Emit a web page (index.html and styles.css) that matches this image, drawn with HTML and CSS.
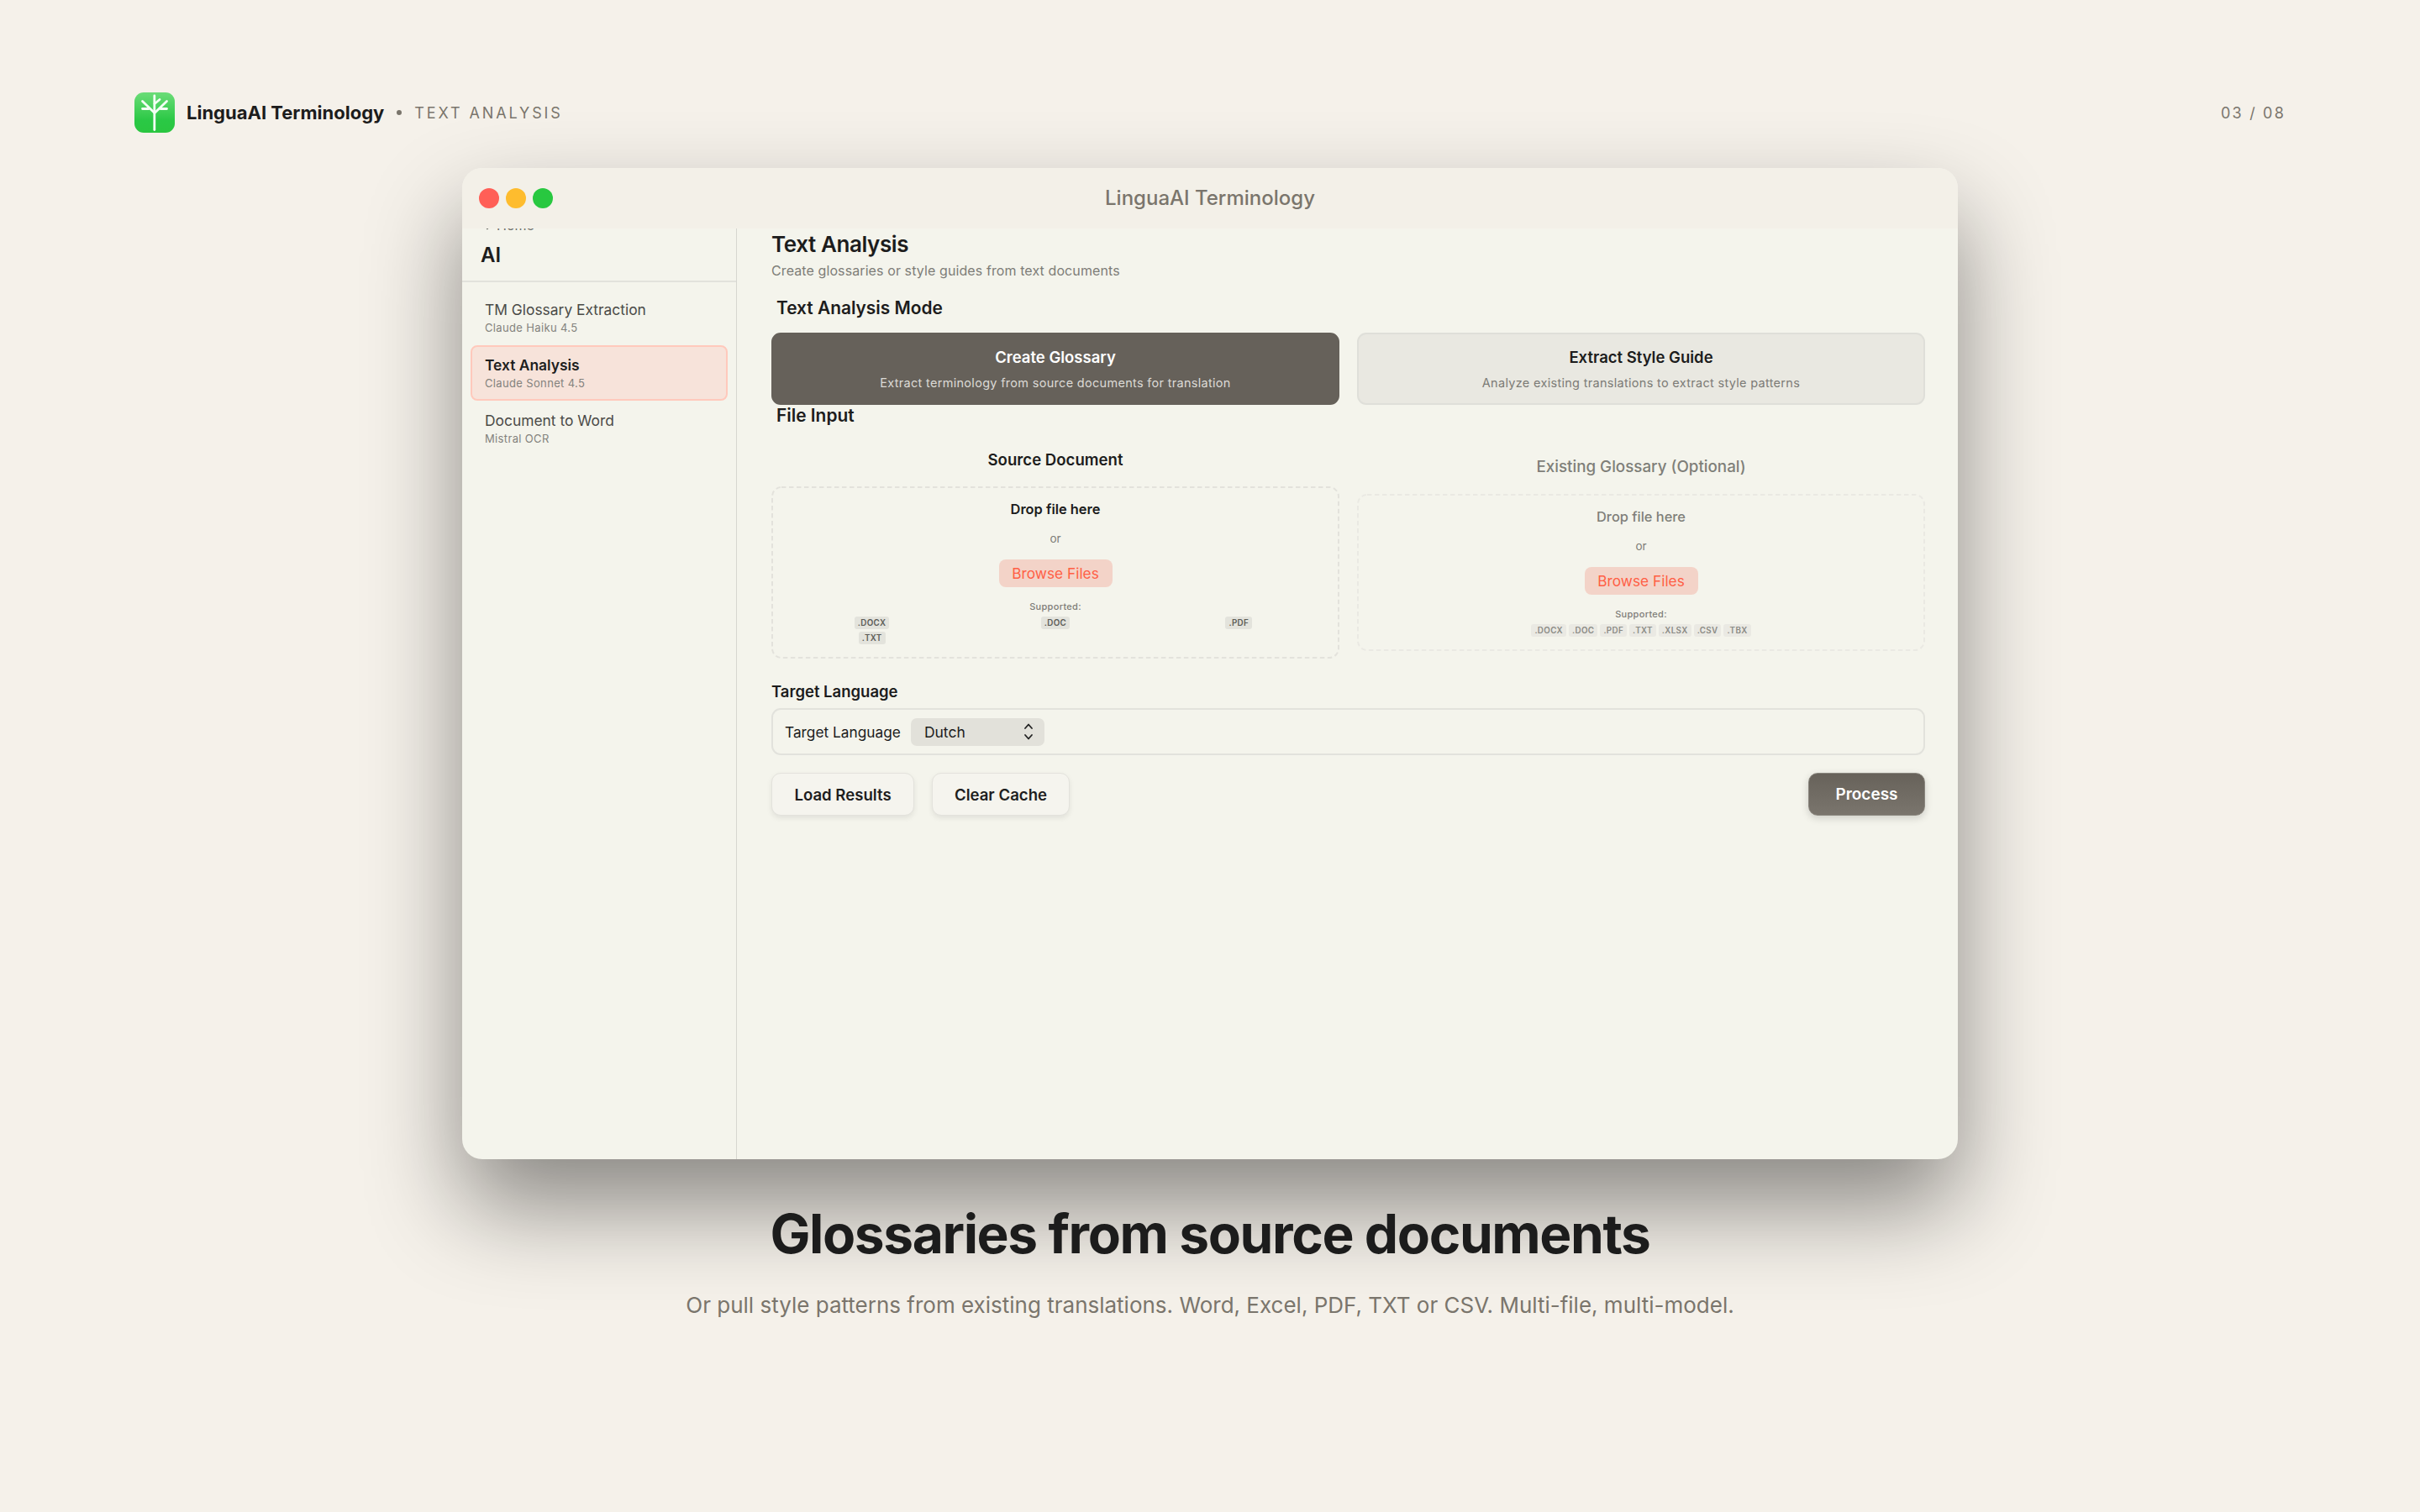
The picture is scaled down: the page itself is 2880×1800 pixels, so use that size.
FILE: index.html
```html
<!DOCTYPE html>
<html lang="en">
<head>
  <meta charset="UTF-8">
  <meta name="viewport" content="width=device-width, initial-scale=1">
  <title>LinguaAI Terminology</title>
  <link rel="stylesheet" href="styles.css">
</head>
<body>

  <header class="top">
    <svg class="logo" width="48" height="48" viewBox="0 0 48 48">
      <defs>
        <linearGradient id="leaf" x1="0" y1="0" x2="0" y2="1">
          <stop offset="0" stop-color="#6bdc77"/>
          <stop offset="0.7" stop-color="#2ac845"/>
          <stop offset="1" stop-color="#2ac640"/>
        </linearGradient>
      </defs>
      <rect width="48" height="48" rx="11" fill="url(#leaf)"/>
      <g fill="none" stroke="#f4fff5" stroke-width="2.8" stroke-linecap="round">
        <path d="M23.8 4V44.500"/>
        <path d="M24 24.500L9.500 10.500M24 24.500L38.500 10.500M24 13.500L30 8.500"/>
        <path d="M9.500 19.500H17M31 19.500H38.500"/>
      </g>
    </svg>
    <span class="brand">LinguaAI Terminology</span>
    <span class="dot"></span>
    <span class="section-name">TEXT ANALYSIS</span>
    <span class="page-no">03 / 08</span>
  </header>

  <div class="window">
    <div class="titlebar">
      <div class="lights">
        <span class="light red"></span>
        <span class="light yellow"></span>
        <span class="light green"></span>
      </div>
      <span class="window-title">LinguaAI Terminology</span>
    </div>

    <div class="window-body">
      <aside class="sidebar">
        <div class="sidebar-head">
          <div class="back">
            <svg width="7" height="12" viewBox="0 0 7 12"><path d="M5.500 1L1.500 6L5.500 11" fill="none" stroke="currentColor" stroke-width="1.700"/></svg>
            <span>Home</span>
          </div>
          <h2>AI</h2>
        </div>
        <nav class="menu">
          <div class="menu-item">
            <div class="menu-title">TM Glossary Extraction</div>
            <div class="menu-model">Claude Haiku 4.5</div>
          </div>
          <div class="menu-item active">
            <div class="menu-title">Text Analysis</div>
            <div class="menu-model">Claude Sonnet 4.5</div>
          </div>
          <div class="menu-item">
            <div class="menu-title">Document to Word</div>
            <div class="menu-model">Mistral OCR</div>
          </div>
        </nav>
      </aside>

      <main class="content">
        <h1>Text Analysis</h1>
        <p class="intro">Create glossaries or style guides from text documents</p>

        <h3 class="mode-heading">Text Analysis Mode</h3>
        <div class="columns">
          <div class="mode selected">
            <div class="mode-title">Create Glossary</div>
            <div class="mode-text">Extract terminology from source documents for translation</div>
          </div>
          <div class="mode">
            <div class="mode-title">Extract Style Guide</div>
            <div class="mode-text">Analyze existing translations to extract style patterns</div>
          </div>
        </div>

        <h3>File Input</h3>
        <div class="columns files">
          <div class="file">
            <div class="file-title">Source Document</div>
            <div class="drop">
              <svg class="dash"><rect x="1" y="1" rx="11"/></svg>
              <div class="drop-title">Drop file here</div>
              <div class="or">or</div>
              <button class="browse">Browse Files</button>
              <div class="supported">Supported:</div>
              <div class="types grid">
                <span>.DOCX</span><span>.DOC</span><span>.PDF</span><span>.TXT</span>
              </div>
            </div>
          </div>
          <div class="file optional">
            <div class="file-title">Existing Glossary (Optional)</div>
            <div class="drop">
              <svg class="dash"><rect x="1" y="1" rx="11"/></svg>
              <div class="drop-title">Drop file here</div>
              <div class="or">or</div>
              <button class="browse">Browse Files</button>
              <div class="supported">Supported:</div>
              <div class="types">
                <span>.DOCX</span><span>.DOC</span><span>.PDF</span><span>.TXT</span><span>.XLSX</span><span>.CSV</span><span>.TBX</span>
              </div>
            </div>
          </div>
        </div>

        <h4>Target Language</h4>
        <div class="language">
          <label>Target Language</label>
          <div class="select">
            <span>Dutch</span>
            <svg width="12" height="20" viewBox="0 0 12 20"><path d="M2 6L6 1.500L10 6M2 14L6 18.500L10 14" fill="none" stroke="#222" stroke-width="1.800" stroke-linecap="round" stroke-linejoin="round"/></svg>
          </div>
        </div>

        <div class="actions">
          <button class="btn load">Load Results</button>
          <button class="btn clear">Clear Cache</button>
          <button class="btn process">Process</button>
        </div>
      </main>
    </div>
  </div>

  <div class="caption">
    <h2>Glossaries from source documents</h2>
    <p>Or pull style patterns from existing translations. Word, Excel, PDF, TXT or CSV. Multi-file, multi-model.</p>
  </div>

</body>
</html>
```
FILE: styles.css
```css
* {
  box-sizing: border-box;
}

body {
  margin: 0;
  height: 1800px;
  overflow: hidden;
  display: flex;
  flex-direction: column;
  align-items: center;
  font-family: Inter, sans-serif;
  background-color: #f5f1ea;
  color: #1c1c1c;
}

h1, h2, h3, h4, p {
  margin: 0;
}

button {
  font-family: inherit;
  border: none;
}

/* Header */
.top {
  width: 100%;
  height: 200px;
  padding: 110px 160px 42px;
  display: flex;
  align-items: center;
  flex-shrink: 0;
}

.brand {
  margin-left: 14px;
  font-size: 22px;
  font-weight: 700;
}

.dot {
  width: 6px;
  height: 6px;
  margin: 0 15px;
  border-radius: 50%;
  background-color: #7a756c;
}

.section-name,
.page-no {
  font-size: 18px;
  letter-spacing: 2.900px;
  color: #7a756c;
}

.page-no {
  margin-left: auto;
  letter-spacing: 2.200px;
}

/* Window */
.window {
  width: 1780px;
  height: 1180px;
  flex-shrink: 0;
  border-radius: 24px;
  overflow: hidden;
  background-color: #f4f4ec;
  box-shadow: 0 56px 112px rgba(0,0,0,0.44);
}

.titlebar {
  height: 72px;
  padding: 0 20px;
  display: grid;
  grid-template-columns: 1fr auto 1fr;
  align-items: center;
  background-color: #f3f0e8;
}

.lights {
  display: flex;
  gap: 8px;
}

.light {
  width: 24px;
  height: 24px;
  border-radius: 50%;
}

.red { background-color: #ff5f57; }
.yellow { background-color: #febc2e; }
.green { background-color: #28c840; }

.window-title {
  padding-bottom: 2px;
  font-size: 24px;
  font-weight: 500;
  color: #7a756c;
}

.window-body {
  display: flex;
  height: 1108px;
  overflow: hidden;
}

/* Sidebar */
.sidebar {
  width: 327px;
  border-right: 1px solid #d6d6d0;
}

.sidebar-head {
  display: flow-root;
  height: 64px;
  padding-left: 22px;
  border-bottom: 2px solid #e2e2dc;
}

.back {
  display: flex;
  align-items: center;
  gap: 9px;
  height: 20px;
  margin-top: -14px;
  padding-left: 3px;
  font-size: 16px;
  line-height: 20px;
  color: #6f6f6a;
}

.sidebar-head h2 {
  margin-top: 11px;
  font-size: 24px;
  line-height: 30px;
  font-weight: 600;
}

.menu {
  padding: 9px 10px;
}

.menu-item {
  height: 66px;
  padding: 11px 15px 0;
  border: 2px solid transparent;
  border-radius: 8px;
}

.menu-title {
  font-size: 17.400px;
  line-height: 22px;
  color: #4b4b48;
}

.menu-model {
  margin-top: 1px;
  font-size: 13px;
  line-height: 18px;
  letter-spacing: 0.350px;
  color: #83827d;
}

.menu-item.active {
  background-color: #f7e3da;
  border-color: #ffc9bc;
}

.active .menu-title {
  font-weight: 600;
  color: #1e1e1e;
}

/* Content */
.content {
  flex: 1;
  padding: 2px 39px 0 41px;
  display: flex;
  flex-direction: column;
}

h1 {
  font-size: 26px;
  line-height: 34px;
  font-weight: 600;
  letter-spacing: -0.400px;
}

.intro {
  margin-top: 4px;
  font-size: 16px;
  line-height: 20px;
  letter-spacing: 0.100px;
  color: #7e7d78;
}

h3 {
  padding-left: 6px;
  font-size: 20.900px;
  line-height: 26px;
  font-weight: 600;
}

.mode-heading {
  margin-top: 22px;
}

.columns {
  display: grid;
  grid-template-columns: 1fr 1fr;
  gap: 21px;
}

.mode-heading + .columns {
  margin-top: 16px;
}

.mode {
  height: 86px;
  padding-top: 16px;
  border: 2px solid #dfdfd9;
  border-radius: 11px;
  background-color: #e9e8e1;
  text-align: center;
}

.mode-title {
  font-size: 18.500px;
  line-height: 22px;
  font-weight: 600;
}

.mode-text {
  margin-top: 11px;
  font-size: 14.500px;
  line-height: 18px;
  letter-spacing: 0.300px;
  color: #7c7b76;
}

.mode.selected {
  border-color: #66615a;
  background-color: #66615a;
  color: #fff;
}

.selected .mode-text {
  color: #dcdad6;
}

.files {
  height: 259px;
  margin-top: 28px;
  align-items: start;
}

.file-title {
  font-size: 18.600px;
  line-height: 22px;
  font-weight: 600;
  text-align: center;
}

.drop {
  position: relative;
  height: 205px;
  margin-top: 21px;
  padding-top: 17px;
  display: flex;
  flex-direction: column;
  align-items: center;
}

.dash {
  position: absolute;
  left: 0;
  top: 0;
  width: 100%;
  height: 100%;
}

.dash rect {
  width: calc(100% - 2px);
  height: calc(100% - 2px);
  fill: none;
  stroke: #e3e2dc;
  stroke-width: 2;
  stroke-dasharray: 5.500 3.500;
}

.drop-title {
  font-size: 16.400px;
  line-height: 20px;
  font-weight: 600;
}

.or {
  margin-top: 16px;
  font-size: 13.500px;
  line-height: 18px;
  color: #7e7d78;
}

.browse {
  position: relative;
  width: 135px;
  height: 33px;
  margin-top: 16px;
  padding: 0;
  border-radius: 8px;
  background-color: #f3d3c8;
  color: #ff5f45;
  font-size: 17.300px;
  line-height: 33px;
}

.supported {
  margin-top: 16px;
  font-size: 11px;
  line-height: 14px;
  font-weight: 500;
  letter-spacing: 0.300px;
  color: #7e7d78;
}

.types {
  display: flex;
  gap: 3px;
  margin-top: 5px;
}

.types span {
  height: 15px;
  padding: 0 4px;
  border-radius: 3px;
  background-color: #e3e3dc;
  color: #5c5c57;
  font-size: 9.800px;
  line-height: 15px;
  font-weight: 600;
  letter-spacing: 0.350px;
}

.types.grid {
  display: grid;
  grid-template-columns: repeat(3, 1fr);
  justify-items: center;
  width: 652px;
}

.optional .file-title,
.optional .drop-title {
  font-weight: 500;
  color: #7f7f79;
}

.optional .file-title {
  font-size: 18.800px;
}

.optional {
  padding-top: 9px;
}

.optional .drop {
  height: 187px;
}

.optional .dash rect {
  stroke: #eae9e3;
}

.optional .types span {
  background-color: #eae9e3;
  color: #8b8b85;
}

h4 {
  margin-top: 16px;
  font-size: 18.500px;
  line-height: 24px;
  font-weight: 600;
}

.language {
  height: 56px;
  margin-top: 8px;
  padding-left: 14px;
  display: flex;
  align-items: center;
  gap: 12px;
  border: 2px solid #e2e2dc;
  border-radius: 11px;
}

.language label {
  font-size: 17.300px;
}

.select {
  width: 159px;
  height: 33px;
  padding: 0 13px 0 16px;
  display: flex;
  align-items: center;
  justify-content: space-between;
  border-radius: 7px;
  background-color: #e2e1da;
  font-size: 17.500px;
}

.actions {
  display: flex;
  gap: 21px;
  margin-top: 21px;
}

.btn {
  height: 51px;
  padding: 0;
  border: 1px solid #e3e2dc;
  border-radius: 11px;
  background-color: #f5f4ee;
  box-shadow: 0 3px 6px rgba(0,0,0,0.08);
  color: #1e1e1e;
  font-size: 18.600px;
  font-weight: 600;
}

.load { width: 170px; }
.clear { width: 164px; }

.process {
  width: 139px;
  margin-left: auto;
  border-color: #8a867e;
  background: linear-gradient(#67625a, #7a756d);
  box-shadow: 0 3px 10px rgba(0,0,0,0.16);
  color: #fff;
  font-size: 19px;
}

/* Caption */
.caption {
  padding-top: 48px;
  text-align: center;
}

.caption h2 {
  font-size: 64px;
  line-height: 82px;
  font-weight: 700;
  letter-spacing: -1.400px;
}

.caption p {
  margin-top: 26px;
  font-size: 26px;
  line-height: 36px;
  color: #7a756c;
}
```
